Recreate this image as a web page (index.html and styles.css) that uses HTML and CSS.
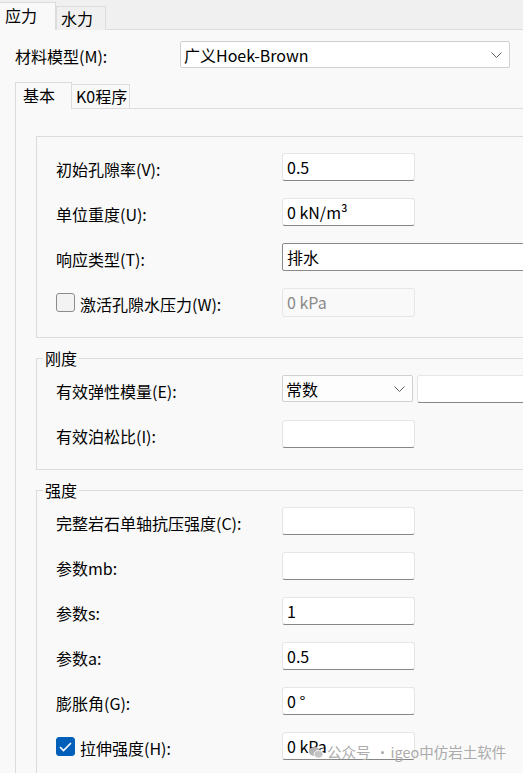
FILE: index.html
```html
<!DOCTYPE html>
<html lang="zh">
<head>
<meta charset="utf-8">
<title>材料</title>
<link rel="stylesheet" href="styles.css">
</head>
<body>
<div class="tabbar">
  <div class="tab active">应力</div>
  <div class="tab">水力</div>
</div>
<div class="model-row">
  <span class="model-label">材料模型(M):</span>
  <div class="combo combo-model">
    <span>广义Hoek-Brown</span>
    <svg class="chev" width="11" height="6" viewBox="0 0 11 6"><path d="M0.5 0.5 L5.5 5.5 L10.5 0.5" fill="none" stroke="#606060" stroke-width="1"/></svg>
  </div>
</div>
<div class="subtabs">
  <div class="subtab active">基本</div>
  <div class="subtab">K0程序</div>
</div>
<div class="panel">
  <div class="group group-plain">
    <div class="row"><span class="label">初始孔隙率(V):</span><div class="input">0.5</div></div>
    <div class="row"><span class="label">单位重度(U):</span><div class="input">0 kN/m³</div></div>
    <div class="row"><span class="label">响应类型(T):</span><div class="input input-wide">排水</div></div>
    <div class="row"><span class="label check-label"><span class="checkbox"></span>激活孔隙水压力(W):</span><div class="input input-disabled">0 kPa</div></div>
  </div>
  <fieldset class="group">
    <legend>刚度</legend>
    <div class="row"><span class="label">有效弹性模量(E):</span>
      <div class="pair">
        <div class="combo combo-small"><span>常数</span><svg class="chev" width="11" height="6" viewBox="0 0 11 6"><path d="M0.5 0.5 L5.5 5.5 L10.5 0.5" fill="none" stroke="#606060" stroke-width="1"/></svg></div>
        <div class="input input-rest"></div>
      </div>
    </div>
    <div class="row"><span class="label">有效泊松比(I):</span><div class="input"></div></div>
  </fieldset>
  <fieldset class="group">
    <legend>强度</legend>
    <div class="row"><span class="label">完整岩石单轴抗压强度(C):</span><div class="input"></div></div>
    <div class="row"><span class="label">参数mb:</span><div class="input"></div></div>
    <div class="row"><span class="label">参数s:</span><div class="input">1</div></div>
    <div class="row"><span class="label">参数a:</span><div class="input">0.5</div></div>
    <div class="row"><span class="label">膨胀角(G):</span><div class="input">0 °</div></div>
    <div class="row"><span class="label check-label"><span class="checkbox checked"><svg width="13" height="10" viewBox="0 0 13 10"><path d="M1 5 L4.5 8.5 L12 1" fill="none" stroke="#fff" stroke-width="1.6"/></svg></span>拉伸强度(H):</span><div class="input">0 kPa</div></div>
  </fieldset>
</div>
<div class="watermark">
  <svg width="14" height="13" viewBox="0 0 14 13"><ellipse cx="5.5" cy="5.5" rx="5.5" ry="4.6" fill="#b4b4b4"/><ellipse cx="9.5" cy="8.3" rx="4.5" ry="3.8" fill="#c4c4c4" stroke="#f9f9f9" stroke-width="1"/></svg>
  <span>公众号</span>
  <span class="wm-dot"></span>
  <span>igeo中仿岩土软件</span>
</div>
</body>
</html>
```

FILE: styles.css
```css
html, body {
  margin: 0;
  padding: 0;
}
body {
  width: 523px;
  height: 773px;
  overflow: hidden;
  background: #f9f9f9;
  font-family: "Noto Sans CJK SC", "Noto Sans", sans-serif;
  font-size: 16px;
  color: #000;
  position: relative;
}

.tabbar {
  height: 30px;
  box-sizing: border-box;
  background: #f0f0f0;
  border-bottom: 1px solid #dcdcdc;
  display: flex;
  align-items: flex-end;
}
.tab {
  box-sizing: border-box;
  height: 24px;
  margin-bottom: -1px;
  padding: 0 0 0 4px;
  width: 50px;
  line-height: 23px;
  border: 1px solid #dcdcdc;
  border-bottom: none;
  background: #f0f0f0;
}
.tab.active {
  height: 28px;
  width: 56px;
  padding-left: 5px;
  line-height: 24px;
  background: #f9f9f9;
  border-left: none;
  position: relative;
  z-index: 1;
}

.model-row {
  display: flex;
  align-items: center;
  margin-top: 11px;
  padding-left: 15px;
  height: 27px;
}
.model-label {
  width: 165px;
  line-height: 22px;
  padding-top: 2px;
}
.combo {
  box-sizing: border-box;
  display: flex;
  align-items: center;
  justify-content: space-between;
  background: #fff;
  border: 1px solid #d0d0d0;
  border-radius: 2px;
  padding: 0 7px 0 3px;
  line-height: 22px;
}
.combo-model {
  width: 330px;
  height: 27px;
}
.combo-small {
  width: 131px;
  height: 27px;
  background: #fdfdfd;
}
.chev {
  display: block;
}

.subtabs {
  display: flex;
  align-items: flex-end;
  margin-top: 14px;
  padding-left: 15px;
  height: 26px;
}
.subtab {
  box-sizing: border-box;
  height: 24px;
  width: 58px;
  padding-left: 4px;
  line-height: 23px;
  border: 1px solid #dcdcdc;
  border-bottom: none;
  border-left: none;
}
.subtab.active {
  height: 27px;
  width: 57px;
  margin-bottom: -1px;
  padding-left: 7px;
  line-height: 24px;
  border-left: 1px solid #dcdcdc;
  background: #f9f9f9;
  position: relative;
  z-index: 1;
}

.panel {
  margin-left: 15px;
  border-top: 1px solid #dcdcdc;
  border-left: 1px solid #dcdcdc;
  padding: 27px 0 0 20px;
}

.group {
  box-sizing: border-box;
  width: 560px;
  margin: 0;
  min-width: 0;
  border: 1px solid #dcdcdc;
  padding: 7px 0 20px 19px;
  display: flex;
  flex-direction: column;
  gap: 17px;
}
.group-plain {
  padding-top: 16px;
  padding-bottom: 21px;
}
fieldset.group {
  margin-top: 10px;
  padding-bottom: 21px;
}
legend {
  margin-left: -13px;
  padding: 0 2px;
  line-height: 20px;
  height: 20px;
}

.row {
  display: flex;
  align-items: center;
  height: 28px;
}
.label {
  width: 226px;
  flex: none;
  line-height: 22px;
  padding-top: 3px;
  white-space: nowrap;
}
.check-label {
  display: flex;
  align-items: center;
  gap: 5px;
}
.checkbox {
  box-sizing: border-box;
  width: 19px;
  height: 19px;
  border: 1px solid #8c8c8c;
  border-radius: 3px;
  background: #f3f3f3;
  display: flex;
  align-items: center;
  justify-content: center;
  margin-top: -2px;
}
.checkbox.checked {
  background: #005fb8;
  border-color: #005fb8;
}

.input {
  box-sizing: border-box;
  width: 133px;
  height: 28px;
  background: #fff;
  border: 1px solid #e6e6e6;
  border-bottom: 1px solid #868686;
  border-radius: 3px;
  padding-left: 4px;
  line-height: 26px;
  white-space: nowrap;
}
.input-wide {
  width: 300px;
  border: 1px solid #8a8a8a;
  border-radius: 2px;
}
.input-disabled {
  background: #f9f9f9;
  border: 1px solid #e6e6e6;
  color: #8a8a8a;
  height: 29px;
}
.pair {
  display: flex;
  gap: 4px;
}
.input-rest {
  width: 200px;
}

.watermark {
  position: absolute;
  left: 309px;
  top: 741px;
  display: flex;
  align-items: center;
  color: #ababab;
  font-size: 14.5px;
  line-height: 22px;
}
.watermark svg {
  margin-right: 4px;
}
.wm-dot {
  width: 3px;
  height: 3px;
  border-radius: 50%;
  background: #ababab;
  margin: 0 7px 0 10px;
}
```
